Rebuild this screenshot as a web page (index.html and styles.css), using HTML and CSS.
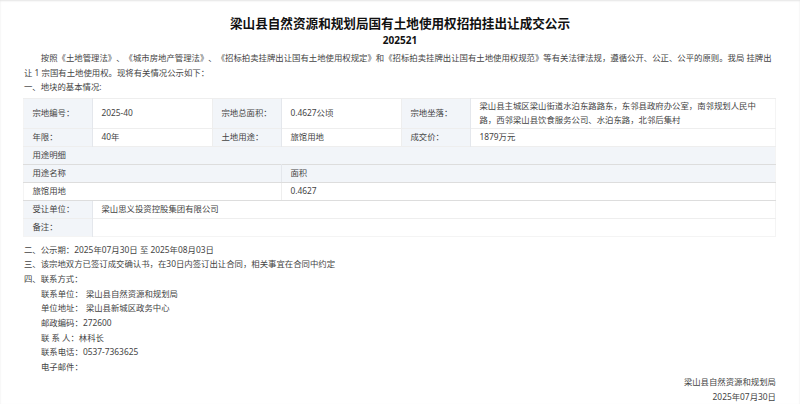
FILE: index.html
```html
<!DOCTYPE html>
<html lang="zh-CN">
<head>
<meta charset="utf-8">
<title>梁山县自然资源和规划局国有土地使用权招拍挂出让成交公示</title>
<link rel="stylesheet" href="styles.css">
</head>
<body>
<main class="notice">
  <h1 class="title">梁山县自然资源和规划局国有土地使用权招拍挂出让成交公示</h1>
  <h2 class="code">202521</h2>
  <p class="line indent">按照《土地管理法》、《城市房地产管理法》、《招标拍卖挂牌出让国有土地使用权规定》和《招标拍卖挂牌出让国有土地使用权规范》等有关法律法规，遵循公开、公正、公平的原则。我局 挂牌出让 1 宗国有土地使用权。现将有关情况公示如下：</p>
  <p class="line">一、地块的基本情况:</p>
  <table class="info">
    <colgroup>
      <col class="c-label"><col class="c-value"><col class="c-label"><col class="c-value"><col class="c-label"><col>
    </colgroup>
    <tr class="tall">
      <th>宗地编号：</th><td>2025-40</td>
      <th>宗地总面积：</th><td>0.4627公顷</td>
      <th>宗地坐落：</th><td>梁山县主城区梁山街道水泊东路路东，东邻县政府办公室，南邻规划人民中路，西邻梁山县饮食服务公司、水泊东路，北邻后集村</td>
    </tr>
    <tr>
      <th>年限：</th><td>40年</td>
      <th>土地用途：</th><td>旅馆用地</td>
      <th>成交价：</th><td>1879万元</td>
    </tr>
    <tr class="head"><th colspan="6">用途明细</th></tr>
    <tr class="head strong"><th colspan="3">用途名称</th><th colspan="3">面积</th></tr>
    <tr class="strong"><td colspan="3">旅馆用地</td><td colspan="3">0.4627</td></tr>
    <tr>
      <th>受让单位：</th><td colspan="5">梁山思义投资控股集团有限公司</td>
    </tr>
    <tr>
      <th>备注：</th><td colspan="5"></td>
    </tr>
  </table>
  <p class="line">二、公示期：2025年07月30日 至 2025年08月03日</p>
  <p class="line">三、该宗地双方已签订成交确认书，在30日内签订出让合同，相关事宜在合同中约定</p>
  <p class="line">四、联系方式：</p>
  <div class="contact">
    <p class="line"><span class="key">联系单位：</span><span class="gap">梁山县自然资源和规划局</span></p>
    <p class="line"><span class="key">单位地址：</span><span class="gap">梁山县新城区政务中心</span></p>
    <p class="line"><span class="key">邮政编码：</span>272600</p>
    <p class="line"><span class="key">联 系 人：</span>林科长</p>
    <p class="line"><span class="key">联系电话：</span>0537-7363625</p>
    <p class="line"><span class="key">电子邮件：</span></p>
  </div>
  <p class="line sign">梁山县自然资源和规划局</p>
  <p class="line sign">2025年07月30日</p>
</main>
</body>
</html>
```
FILE: styles.css
```css
* { box-sizing: border-box; }
html, body { margin: 0; padding: 0; }
body {
  background: #fff;
  color: #444;
  font-family: "Noto Sans", "Noto Sans CJK SC", sans-serif;
  font-size: 8.4px;
  text-spacing-trim: space-all;
  height: 404px;
  overflow: hidden;
  box-shadow: inset 0 1px 2px #e4e4e4;
}
.notice { padding: 15px 24px 0 24px; }
.title {
  margin: 0;
  color: #111;
  font-size: 12.6px;
  font-weight: 700;
  line-height: 18px;
  text-align: center;
}
.code {
  margin: 0 0 4px;
  color: #111;
  font-size: 10px;
  font-weight: 700;
  line-height: 14px;
  text-align: center;
}
.line { margin: 0; line-height: 14.7px; }
.indent { text-indent: 16.8px; }
.info {
  width: 753px;
  margin: 2.6px 0 5.4px -1px;
  border-collapse: collapse;
  table-layout: fixed;
  border: 1px solid #f4f4f4;
}
.c-label { width: 69px; }
.c-value { width: 120px; }
.info tr { height: 18px; }
.info tr.tall { height: 29px; }
.info th, .info td {
  padding: 0 8.4px;
  font-weight: 400;
  text-align: left;
  line-height: 14.7px;
  border: 1px solid #eeeeee;
  border-width: 1px 0 0 0;
}
.info th { padding-right: 0; background: #f2f5f9; border-right: 1px solid #e4e7ec; }
.info td { border-right: 1px solid #eeeeee; }
.info tr > :last-child { border-right: 0; }
.info .strong th, .info .strong td { border-top-color: #dddddd; border-bottom: 1px solid #dddddd; }
.contact { padding-left: 17px; }
.key { display: inline-block; }
.gap { margin-left: 3px; }
.sign { text-align: right; }
```
